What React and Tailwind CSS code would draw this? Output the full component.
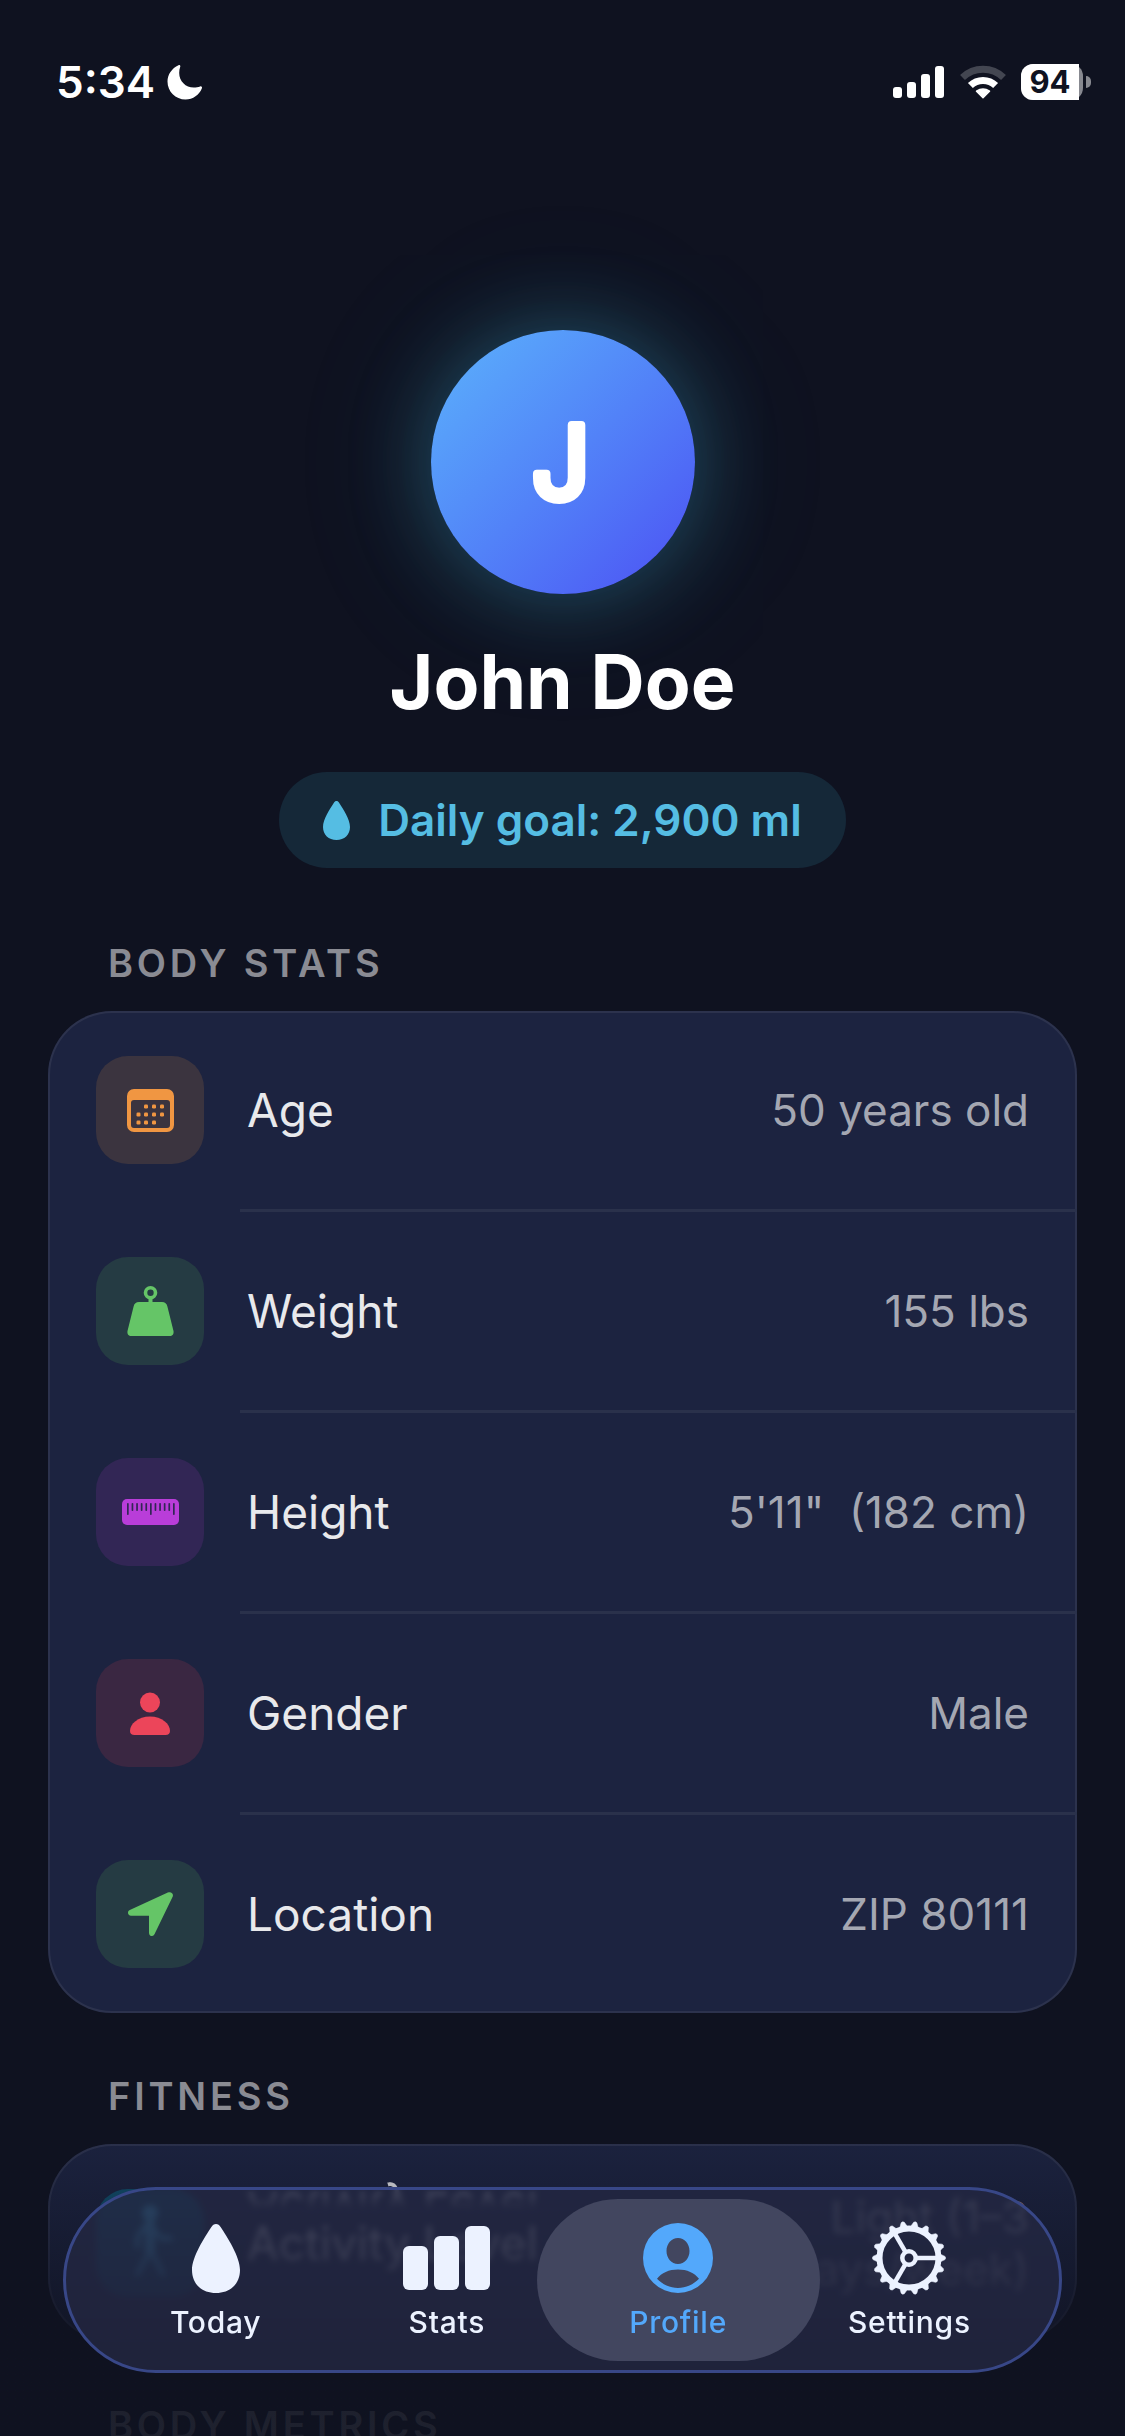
import React from 'react';

const DROP = 'M24 0c2 0 3.400 1 4.600 2.900C35.500 13.500 48 32.500 48 46c0 14-10 23-24 23S0 60 0 46C0 32.500 12.500 13.500 19.400 2.900 20.600 1 22 0 24 0z';

function MoonIcon() {
  return (
    <svg viewBox="0 0 36 36" className="h-9 w-9" fill="currentColor" aria-hidden="true">
      <path d="M11.500 1.200c.9-.5 2.200.3 1.800 1.400-.8 2-1.100 4.200-1.100 6.400 0 8.200 6.400 14.600 14.600 14.600 2.200 0 4.400-.5 6.300-1.200 1.200-.4 2.300.7 1.800 1.900C32.300 31 26 35.500 18.500 35.500 8.600 35.500.5 27.600.5 17.500.5 10.500 4.800 4.200 11.500 1.200z" />
    </svg>
  );
}

function SignalIcon() {
  return (
    <svg viewBox="0 0 52 32" className="h-8 w-[52px]" fill="currentColor" aria-hidden="true">
      <rect x="0" y="21" width="9" height="11" rx="3" />
      <rect x="14" y="16" width="9" height="16" rx="3" />
      <rect x="28" y="8" width="9" height="24" rx="3" />
      <rect x="42" y="0" width="9" height="32" rx="3" />
    </svg>
  );
}

function WifiIcon() {
  return (
    <svg viewBox="0 0 46 34" className="h-[34px] w-[46px]" fill="none" stroke="currentColor" strokeWidth="7" aria-hidden="true">
      <path d="M2.500 12.600a29.500 29.500 0 0 1 41 0" opacity=".22" />
      <path d="M10.400 20.600a18 18 0 0 1 25.200 0" />
      <path d="M16.500 26.200q6.500-4.600 13 0L23 32.600z" fill="currentColor" strokeWidth="1.500" strokeLinejoin="round" />
    </svg>
  );
}

function Battery({ level }) {
  return (
    <div className="flex items-center gap-[3px]">
      <div className="relative flex h-9 w-[62px] items-center justify-center rounded-xl bg-white/50">
        <div className="absolute inset-y-0 left-0 rounded-l-xl bg-white" style={{ width: `${level}%` }} />
        <span className="relative pr-1 text-[31px] leading-10 font-bold text-[#0f1220]">{level}</span>
      </div>
      <div className="h-3 w-[5px] rounded-r-full bg-white/50" />
    </div>
  );
}

function CalendarIcon() {
  const dots = [[17, 18], [25, 18], [33, 18], [9.500, 26], [17, 26], [25, 26], [33, 26], [9.500, 34], [17, 34], [25, 34]];
  return (
    <svg viewBox="0 0 47 43" className="h-[43px] w-[47px]" fill="currentColor" aria-hidden="true">
      <path fillRule="evenodd" d="M7 0h33a7 7 0 0 1 7 7v29a7 7 0 0 1-7 7H7a7 7 0 0 1-7-7V7a7 7 0 0 1 7-7zM7 11a3 3 0 0 0-3 3v22a3 3 0 0 0 3 3h33a3 3 0 0 0 3-3V14a3 3 0 0 0-3-3z" />
      {dots.map(([x, y]) => (
        <rect key={`${x}-${y}`} x={x} y={y - 2.5} width="4" height="4" rx="1.200" />
      ))}
    </svg>
  );
}

function WeightIcon() {
  return (
    <svg viewBox="0 0 47 50" className="h-[50px] w-[47px]" fill="currentColor" aria-hidden="true">
      <circle cx="23.500" cy="6.800" r="5" fill="none" stroke="currentColor" strokeWidth="3.600" />
      <path d="M21.500 12h4v5h-4z" />
      <path d="M12 16h23c3 0 4.800 1.600 5.400 4.500L46.500 45c.5 3-1 5-4 5H4.500c-3 0-4.500-2-4-5L6.600 20.500C7.200 17.600 9 16 12 16z" />
    </svg>
  );
}

function RulerIcon() {
  const ticks = [5, 9.600, 14.200, 18.800, 23.400, 28, 32.600, 37.200, 41.800, 46.400, 51];
  return (
    <svg viewBox="0 0 57 26" className="h-[26px] w-[57px]" aria-hidden="true">
      <rect width="57" height="26" rx="5" fill="currentColor" />
      {ticks.map((x, i) => (
        <rect key={x} x={x} y="4" width="1.700" height={i % 5 === 0 ? 12 : 8} rx=".8" fill="#322655" />
      ))}
    </svg>
  );
}

function PersonIcon() {
  return (
    <svg viewBox="0 0 40 43" className="h-[43px] w-10" fill="currentColor" aria-hidden="true">
      <circle cx="20" cy="10.500" r="10" />
      <path d="M20 24.500c12 0 20 7.500 20 14.500 0 2.600-1.600 4-4.500 4h-31C1.600 43 0 41.600 0 39c0-7 8-14.500 20-14.500z" />
    </svg>
  );
}

function ArrowIcon() {
  return (
    <svg viewBox="0 0 45 44" className="h-11 w-[45px]" fill="currentColor" aria-hidden="true">
      <path d="M1.800 18 39.800.6c3.400-1.500 6.300 1.200 4.700 4.500L26.600 42c-1.600 3.200-5.600 2.500-5.600-1.200V23.700H3C-.5 23.700-1 19.300 1.800 18z" />
    </svg>
  );
}

function WalkIcon() {
  return (
    <svg viewBox="0 0 48 66" className="h-[76px] w-14" fill="none" stroke="currentColor" strokeWidth="4" strokeLinecap="round" strokeLinejoin="round" aria-hidden="true">
      <circle cx="24" cy="7" r="5" fill="currentColor" />
      <path d="M23 16v24M25 16v24" strokeWidth="7" />
      <path d="M20 18l-7 10v8M28 22l6 7h8M24 40l-11 20M25 40l10 20" />
    </svg>
  );
}

function DropIcon({ className }) {
  return (
    <svg viewBox="0 0 48 69" className={className} fill="currentColor" aria-hidden="true">
      <path d={DROP} />
    </svg>
  );
}

function BarsIcon() {
  return (
    <svg viewBox="0 0 87 69" className="h-[69px] w-[87px]" fill="currentColor" aria-hidden="true">
      <rect x="0" y="22" width="25" height="44" rx="6" />
      <rect x="31" y="12" width="25" height="54" rx="6" />
      <rect x="62" y="2" width="25" height="64" rx="6" />
    </svg>
  );
}

function ProfileIcon() {
  return (
    <svg viewBox="0 0 70 70" className="h-[70px] w-[70px]" fill="currentColor" aria-hidden="true">
      <path fillRule="evenodd" d="M35 0a35 35 0 1 1 0 70 35 35 0 0 1 0-70zm0 15c-6.500 0-11.500 5.700-11.500 13S28.500 41 35 41s11.500-5.700 11.500-13S41.500 15 35 15zm0 31.500c-9 0-16.500 3.300-21 9.300C19.500 61.500 27 65 35 65s15.500-3.500 21-9.200c-4.500-6-12-9.300-21-9.300z" />
    </svg>
  );
}

function GearIcon() {
  const teeth = Array.from({ length: 18 }, (_, i) => i * 20);
  return (
    <svg viewBox="-38 -38 76 76" className="h-[76px] w-[76px]" fill="none" stroke="currentColor" aria-hidden="true">
      <circle r="29.500" strokeWidth="6" />
      <circle r="6.700" strokeWidth="4.500" />
      {[0, 120, 240].map((a) => (
        <path key={a} d="M8 0H28" strokeWidth="4.500" transform={`rotate(${a})`} />
      ))}
      {teeth.map((a) => (
        <path key={a} d="M31-4 36-1.600Q37.400 0 36 1.600L31 4z" fill="currentColor" strokeWidth=".5" transform={`rotate(${a})`} />
      ))}
    </svg>
  );
}

const bodyStats = [
  { label: 'Age', value: '50 years old', icon: CalendarIcon, tile: 'bg-[#3b343f] text-[#f09642]' },
  { label: 'Weight', value: '155 lbs', icon: WeightIcon, tile: 'bg-[#253b43] text-[#65c567]' },
  { label: 'Height', value: '5\'11"\u00a0 (182 cm)', icon: RulerIcon, tile: 'bg-[#322655] text-[#b93dd9]' },
  { label: 'Gender', value: 'Male', icon: PersonIcon, tile: 'bg-[#3a2742] text-[#ec455a]' },
  { label: 'Location', value: 'ZIP 80111', icon: ArrowIcon, tile: 'bg-[#253b43] text-[#65c567]' },
];

const tabs = [
  { label: 'Today', icon: () => <DropIcon className="h-[69px] w-12" /> },
  { label: 'Stats', icon: BarsIcon },
  { label: 'Profile', icon: ProfileIcon, active: true },
  { label: 'Settings', icon: GearIcon },
];

function SectionTitle({ children }) {
  return (
    <h2 className="mb-6 pl-[60px] text-[38px] leading-[47px] font-semibold tracking-widest text-[#8a8b93] uppercase">
      {children}
    </h2>
  );
}

function Card({ children }) {
  return <div className="rounded-[64px] bg-[#1c2340] inset-ring-2 inset-ring-white/7">{children}</div>;
}

function Row({ label, value, icon: Icon, tile, mirrored }) {
  return (
    <div className="flex h-[198px] items-center pr-12 pl-12">
      <div className={`flex h-[108px] w-[108px] shrink-0 items-center justify-center rounded-[32px] ${tile}`}>
        <Icon />
      </div>
      <span className={`ml-[43px] text-[46px] leading-[60px] text-[#e8e9ec] ${mirrored ? '[-webkit-box-reflect:above_-26px_linear-gradient(transparent_50%,white_75%)]' : ''}`}>
        {label}
      </span>
      <span className="ml-auto text-right text-[44px] leading-[52px] whitespace-pre-line text-[#a4a7b2]">{value}</span>
    </div>
  );
}

function TabBar() {
  return (
    <nav className="absolute inset-x-[63px] bottom-[63px] flex h-[186px] rounded-full border-3 border-[#384787] bg-[#242843]/78 px-[34px] backdrop-blur-[3px]">
      {tabs.map(({ label, icon: Icon, active }) => (
        <button
          key={label}
          type="button"
          aria-current={active ? 'page' : undefined}
          className={`relative flex flex-1 flex-col items-center justify-center gap-2 ${active ? 'text-[#53a8fb]' : 'text-[#ecf2ff]'}`}
        >
          {active && <span className="absolute -inset-x-[26px] inset-y-[9px] rounded-full bg-[#42465f]" />}
          <span className="relative flex h-[76px] items-center">
            <Icon />
          </span>
          <span className="relative text-[30px] leading-9 font-medium tracking-wide">{label}</span>
        </button>
      ))}
    </nav>
  );
}

export default function App() {
  return (
    <div className="relative h-screen overflow-hidden bg-[#0f1220] font-['Inter',sans-serif] text-white">
      <header className="flex h-[164px] items-center justify-between pr-[34px] pl-14">
        <div className="flex items-center gap-3">
          <span className="text-[44px] leading-[54px] font-semibold">5:34</span>
          <MoonIcon />
        </div>
        <div className="flex items-center gap-[15px]">
          <SignalIcon />
          <WifiIcon />
          <Battery level={94} />
        </div>
      </header>

      <main className="px-12">
        <section className="flex flex-col items-center pt-[166px]">
          <div className="h-[264px] w-[264px] rounded-full bg-linear-to-br from-[#5cb2fb] to-[#4d4df3] shadow-[0_0_80px_rgba(60,170,205,0.34),0_0_150px_rgba(60,170,205,0.16)]">
            <svg viewBox="0 0 264 264" className="h-full w-full" role="img" aria-label="J">
              <text
                x="130"
                y="169"
                textAnchor="middle"
                className="fill-white stroke-white font-['Inter',sans-serif] text-[102px] font-normal"
                strokeWidth="8"
                strokeLinejoin="round"
              >
                J
              </text>
            </svg>
          </div>
          <h1 className="mt-10 text-[75px] leading-24 font-bold">John Doe</h1>
          <div className="mt-[42px] flex h-24 items-center gap-7 rounded-full bg-[#152838] px-[44px] text-[#55bde3]">
            <DropIcon className="h-[39px] w-[27px]" />
            <span className="text-[44px] leading-[56px] font-semibold">Daily goal: 2,900 ml</span>
          </div>
        </section>

        <section className="mt-[72px]">
          <SectionTitle>Body Stats</SectionTitle>
          <Card>
            {bodyStats.map((item, i) => (
              <React.Fragment key={item.label}>
                {i > 0 && <div className="ml-48 h-[3px] bg-[#2a314b]" />}
                <Row {...item} />
              </React.Fragment>
            ))}
          </Card>
        </section>

        <section className="mt-[60px]">
          <SectionTitle>Fitness</SectionTitle>
          <Card>
            <Row label="Activity Level" value={'Light (1–3\ndays/week)'} icon={WalkIcon} tile="bg-[#10506e] text-[#3fc4f5]" mirrored />
          </Card>
        </section>

        <section className="mt-[60px]">
          <SectionTitle>Body Metrics</SectionTitle>
        </section>
      </main>

      <div className="pointer-events-none absolute inset-x-0 bottom-0 h-[310px] bg-linear-to-b from-[#0f1220]/0 to-[#0f1220]/88 to-75%" />
      <TabBar />
    </div>
  );
}
